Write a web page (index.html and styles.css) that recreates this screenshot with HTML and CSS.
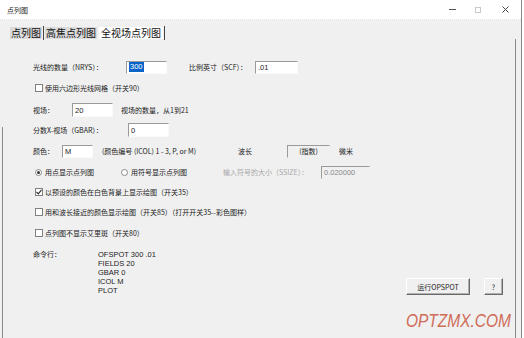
FILE: index.html
```html
<!DOCTYPE html>
<html>
<head>
<meta charset="utf-8">
<link rel="stylesheet" href="styles.css">
</head>
<body>
<div class="window">
  <div class="titlebar">
    <span class="title">点列图</span>
    <div class="controls">
      <span class="ctl-min"></span>
      <span class="ctl-max"></span>
      <svg class="ctl-close" width="7" height="7" viewBox="0 0 7 7"><path d="M0.5 0.5L6.5 6.5M6.5 0.5L0.5 6.5" stroke="#444" stroke-width="1"/></svg>
    </div>
  </div>
  <div class="client">
    <div class="tabs">
      <span class="tab">点列图</span><span class="sep"></span><span class="tab">高焦点列图</span><span class="tab active">全视场点列图</span><span class="sep"></span>
    </div>
    <div class="panel">
      <div class="row r1">
        <span class="lbl w93">光线的数量（NRYS）：</span>
        <span class="input w41"><span class="sel">300</span></span>
        <span class="lbl ml22 w66">比例英寸（SCF）：</span>
        <span class="input w43">.01</span>
      </div>
      <div class="row r2">
        <span class="chk"></span>
        <span class="lbl">使用六边形光线网格（开关90）</span>
      </div>
      <div class="row r3">
        <span class="lbl w39">视场：</span>
        <span class="input w41 tall">20</span>
        <span class="lbl ml8">视场的数量，从1到21</span>
      </div>
      <div class="row r4">
        <span class="lbl w95">分数X-视场（GBAR）：</span>
        <span class="input w41 tall">0</span>
      </div>
      <div class="row r5">
        <span class="lbl w29">颜色：</span>
        <span class="input w31">M</span>
        <span class="lbl ml9 w136">(颜色编号 (ICOL) 1 - 3, P, or M)</span>
        <span class="lbl w49">波长</span>
        <span class="input w43 flat">(指数)</span>
        <span class="lbl ml9">微米</span>
      </div>
      <div class="row r6">
        <span class="radio on"></span>
        <span class="lbl w74">用点显示点列图</span>
        <span class="radio"></span>
        <span class="lbl w92">用符号显示点列图</span>
        <span class="lbl w98 dis">输入符号的大小（SSIZE）：</span>
        <span class="input w49 flat dis-in">0.020000</span>
      </div>
      <div class="row r7">
        <span class="chk on"><svg width="6" height="6" viewBox="0 0 6 6"><path d="M0.5 3L2.3 4.8L5.5 0.8" fill="none" stroke="#333" stroke-width="1.2"/></svg></span>
        <span class="lbl">以预设的颜色在白色背景上显示绘图（开关35）</span>
      </div>
      <div class="row r8">
        <span class="chk"></span>
        <span class="lbl">用和波长接近的颜色显示绘图（开关85）（打开开关35--彩色图样）</span>
      </div>
      <div class="row r9">
        <span class="chk"></span>
        <span class="lbl">点列图不显示艾里斑（开关80）</span>
      </div>
      <div class="bottom">
        <div class="cmd">
          <span class="lbl w65">命令行：</span>
          <div class="lines">
            <span>OFSPOT 300 .01</span>
            <span>FIELDS 20</span>
            <span>GBAR 0</span>
            <span>ICOL M</span>
            <span>PLOT</span>
          </div>
        </div>
        <div class="buttons">
          <button class="btn run">运行OPSPOT</button>
          <button class="btn help">?</button>
        </div>
      </div>
      <div class="watermark">OPTZMX.COM</div>
    </div>
  </div>
</div>
</body>
</html>
```

FILE: styles.css
```css
* { box-sizing: border-box; }
html, body { margin: 0; padding: 0; }
body {
  width: 524px;
  height: 338px;
  background: #ffffff;
  overflow: hidden;
  font-family: "Noto Sans CJK SC", "Liberation Sans", sans-serif;
  color: #1a1a1a;
}
.window {
  width: 522px;
  height: 338px;
  border-right: 1px solid #8a8a8a;
  display: flex;
  flex-direction: column;
}
.titlebar {
  height: 20px;
  background: #fff;
  display: flex;
  align-items: center;
  border-bottom: 1px dotted #e0e0e0;
  flex-shrink: 0;
}
.title {
  font-size: 7px;
  margin-left: 7px;
  color: #222;
}
.controls {
  margin-left: auto;
  display: flex;
  align-items: center;
  margin-right: 12px;
}
.ctl-min {
  width: 7px;
  height: 1px;
  background: #555;
  margin-right: 19px;
}
.ctl-max {
  width: 6px;
  height: 6px;
  border: 1px solid #c8c8c8;
  margin-right: 21px;
}
.ctl-close { display: block; }
.client {
  flex: 1;
  background: #f0f0f0;
  display: flex;
  flex-direction: column;
}
.tabs {
  padding: 7px 0 0 10px;
  display: flex;
  align-items: center;
  height: 19px;
  flex-shrink: 0;
}
.tab {
  font-size: 10px;
  line-height: 12px;
  height: 12px;
  background: #dadada;
  padding: 0 1px;
  color: #111;
  display: inline-flex;
  align-items: center;
}
.tab.active {
  background: #fff;
  margin-left: 2px;
  padding: 0 2px 0 2px;
}
.sep {
  width: 1px;
  height: 14px;
  background: #444;
  margin: 0 1px;
}
.panel {
  position: relative;
  flex: 1;
  margin-left: 2px;
  width: 514px;
  border-left: 1px solid #8a8a8a;
  border-right: 1px solid #8a8a8a;
  border-image: linear-gradient(to bottom, transparent 88px, #8a8a8a 88px) 1;
  border-top: 0;
  border-bottom: 0;
  padding: 18px 12px 0 30px;
  display: flex;
  flex-direction: column;
}
.panel::after {
  content: "";
  position: absolute;
  right: -1px;
  top: 0;
  bottom: 0;
  width: 1px;
  background: #8a8a8a;
}
.row {
  height: 20px;
  display: flex;
  align-items: center;
  flex-shrink: 0;
}
.r2 { margin-top: 1px; }
.r3 { margin-top: 2px; }
.r5 { margin-top: 1px; }
.r6 { margin-top: 1px; }
.r9 { margin-top: 1px; }
.lbl {
  font-size: 7px;
  white-space: nowrap;
  line-height: 10px;
  flex-shrink: 0;
}
.w29 { width: 29px; }
.w39 { width: 39px; }
.w49 { width: 49px; }
.w65 { width: 65px; }
.w66 { width: 66px; }
.w74 { width: 74px; }
.w92 { width: 92px; }
.w93 { width: 93px; }
.w95 { width: 95px; }
.w98 { width: 98px; }
.w136 { width: 136px; }
.ml8 { margin-left: 8px; }
.ml9 { margin-left: 9px; }
.ml22 { margin-left: 22px; }
.input {
  height: 13px;
  background: #fff;
  border-top: 1px solid #9a9a9a;
  border-left: 1px solid #9a9a9a;
  border-right: 1px solid #fafafa;
  border-bottom: 1px solid #fafafa;
  font-family: "Liberation Sans", sans-serif;
  font-size: 7.5px;
  line-height: 11px;
  padding-left: 2px;
  display: flex;
  align-items: center;
  flex-shrink: 0;
  color: #222;
}
.input.tall { height: 14px; }
.w31 { width: 31px; }
.w41 { width: 41px; }
.w43 { width: 43px; }
.input.w49 { width: 49px; }
.input.flat {
  background: #f0f0f0;
  border-right-color: #f0f0f0;
  border-bottom-color: #f0f0f0;
}
.input.w43.flat {
  justify-content: center;
  font-family: "Noto Sans CJK SC", sans-serif;
  font-size: 7px;
  padding-left: 0;
}
.dis { color: #a8a8a8; }
.dis-in { color: #888; }
.sel {
  background: #0a64c8;
  color: #fff;
  padding: 0 1px;
  line-height: 10px;
}
.chk {
  width: 8px;
  height: 8px;
  border: 1px solid #808080;
  background: #fff;
  margin-left: 2px;
  margin-right: 2px;
  flex-shrink: 0;
  display: flex;
  align-items: center;
  justify-content: center;
}
.chk svg { display: block; }
.radio {
  width: 7px;
  height: 7px;
  border-radius: 50%;
  border: 1px solid #8a8a8a;
  background: #fff;
  margin-left: 2px;
  margin-right: 3px;
  flex-shrink: 0;
  position: relative;
}
.radio.on::after {
  content: "";
  position: absolute;
  left: 1px;
  top: 1px;
  width: 3px;
  height: 3px;
  border-radius: 50%;
  background: #333;
}
.bottom {
  margin-top: 7px;
  display: flex;
  align-items: flex-end;
}
.cmd {
  display: flex;
  align-items: flex-start;
}
.cmd .lbl { line-height: 9px; }
.lines {
  display: flex;
  flex-direction: column;
  font-family: "Liberation Sans", sans-serif;
  font-size: 7.5px;
  line-height: 9px;
  color: #222;
}
.buttons {
  margin-left: auto;
  display: flex;
  gap: 14px;
}
.btn {
  height: 17px;
  background: #f0f0f0;
  border-top: 1px solid #fff;
  border-left: 1px solid #fff;
  border-right: 1px solid #6a6a6a;
  border-bottom: 1px solid #6a6a6a;
  box-shadow: inset -1px -1px 0 #b0b0b0;
  font-family: "Noto Sans CJK SC", "Liberation Sans", sans-serif;
  font-size: 7px;
  color: #222;
  padding: 0;
  margin: 0;
}
.run { width: 64px; }
.help { width: 19px; }
.watermark {
  position: absolute;
  left: 403px;
  top: 272px;
  font-family: "Liberation Sans", sans-serif;
  font-style: italic;
  font-size: 18px;
  line-height: 20px;
  color: #cf6c58;
  white-space: nowrap;
  transform: scaleX(0.86);
  transform-origin: left center;
}
```
